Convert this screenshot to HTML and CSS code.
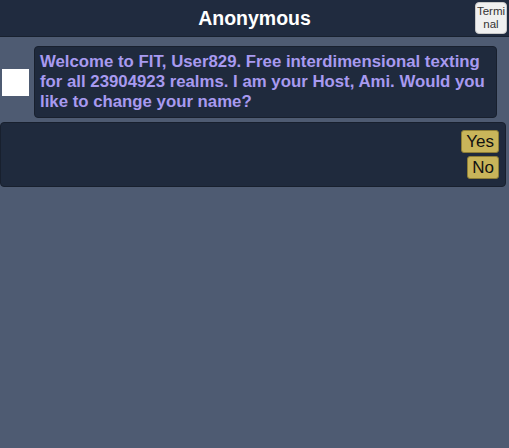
FILE: index.html
```html
<!DOCTYPE html>
<html lang="en">
<head>
  <meta charset="UTF-8">
  <meta name="viewport" content="width=device-width, initial-scale=1.0">
  <title>FIT</title>
  <link rel="stylesheet" href="styles.css">
</head>
<body>

  <header class="topbar">
    <h1 class="title">Anonymous</h1>
    <button class="terminal">Termi nal</button>
  </header>

  <main class="chat">
    <div class="message">
      <div class="avatar"></div>
      <div class="bubble">Welcome to FIT, User829. Free interdimensional texting for all 23904923 realms. I am your Host, Ami. Would you like to change your name?</div>
    </div>

    <div class="choices">
      <button class="choice">Yes</button>
      <button class="choice">No</button>
    </div>
  </main>

</body>
</html>
```

FILE: styles.css
```css
body {
  font-family: 'Liberation Sans', Arial, sans-serif;
  background-color: #4e5b72;
  margin: 0;
  padding: 0;
  height: 100vh;
}

.topbar {
  position: relative;
  height: 36px;
  background-color: #202b3f;
  border-bottom: 1px solid #18212f;
  display: flex;
  align-items: center;
  justify-content: center;
}

.title {
  margin: 0;
  color: #ffffff;
  font-size: 19.5px;
  font-weight: bold;
}

.terminal {
  position: absolute;
  top: 2px;
  right: 2px;
  width: 32px;
  height: 32px;
  padding: 0;
  background-color: #f0f0f0;
  color: #333;
  border: 1px solid #c8c8c8;
  border-radius: 4px;
  font-family: 'Liberation Sans', Arial, sans-serif;
  font-size: 11.5px;
  line-height: 13px;
}

.chat {
  display: flex;
  flex-direction: column;
  gap: 4px;
  padding-top: 9px;
}

.message {
  display: flex;
  align-items: center;
  gap: 5px;
  padding-left: 2px;
}

.avatar {
  width: 27px;
  height: 27px;
  background-color: #ffffff;
  flex-shrink: 0;
}

.bubble {
  width: 451px;
  padding: 5px;
  background-color: #1f2a3d;
  border: 1px solid #18202e;
  border-radius: 4px;
  color: #a89af0;
  font-size: 16.8px;
  font-weight: bold;
  line-height: 20px;
}

.choices {
  margin-right: 3px;
  padding: 7px 6px 7px 0;
  background-color: #1f2a3d;
  border: 1px solid #18202e;
  border-radius: 4px;
  display: flex;
  flex-direction: column;
  align-items: flex-end;
  gap: 3px;
}

.choice {
  padding: 1px 4px 0;
  background-color: #c9b55a;
  color: #111;
  border: 1px solid #8f7f36;
  border-radius: 3px;
  font-family: 'Liberation Sans', Arial, sans-serif;
  font-size: 17px;
  line-height: 20px;
}
```
